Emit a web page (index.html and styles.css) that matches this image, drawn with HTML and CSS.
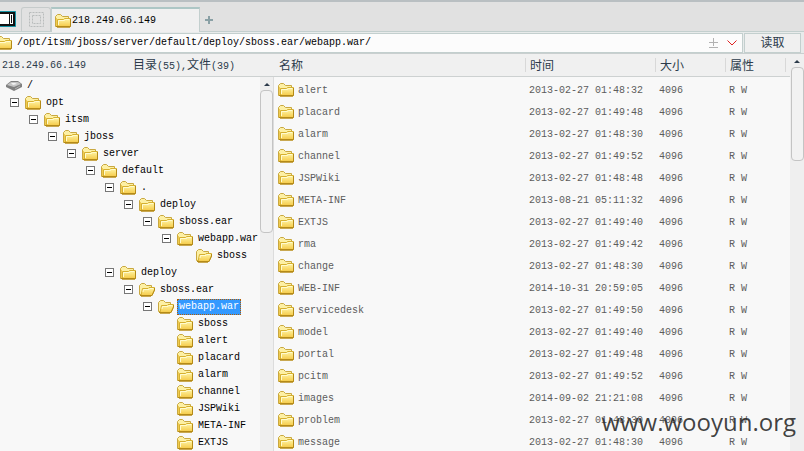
FILE: index.html
```html
<!DOCTYPE html>
<html lang="zh-CN">
<head>
<meta charset="utf-8">
<title>218.249.66.149</title>
<link rel="stylesheet" href="styles.css">
</head>
<body>
<svg class="defs" aria-hidden="true">
  <defs>
    <linearGradient id="gold" x1="0" y1="0" x2="0" y2="1"><stop offset="0" stop-color="#fff6a8"/><stop offset="1" stop-color="#f5ca48"/></linearGradient>
    <symbol id="folder" viewBox="0 0 16 14">
      <path d="M.5 12.500V2.500L2.500 .500H5.500L7.500 2.500H13.500V12.500Z" fill="#fdf0a4" stroke="#c9a840"/>
      <path d="M1.500 4V12" stroke="#f1cb4f"/>
      <path d="M2.500 12.500V5.500H8.500L9.500 4.500H15.500V12.500Z" fill="url(#gold)" stroke="#d6b030"/>
      <path d="M3.500 11V6.500H9.500L10.500 5.500H14" fill="none" stroke="#fffbd0"/>
      <path d="M1 12.500H15.500V5" fill="none" stroke="#b48a18"/>
      <path d="M2 13.500H15" stroke="#c9a850"/>
    </symbol>
    <symbol id="folder-open" viewBox="0 0 16 14">
      <path d="M.5 11.500V2.500L2.500 .500H5.500L7.500 2.500H12.500V11.500Z" fill="#fdf0a4" stroke="#c9a840"/>
      <path d="M2 12.500L3.500 5.500H9L10 4.500H15.500V7L13 12.500Z" fill="url(#gold)" stroke="#d6b030"/>
      <path d="M4 9L4.500 6.500H10L11 5.500H14" fill="none" stroke="#fffbd0"/>
      <path d="M1 12.500H13L15.500 7V5" fill="none" stroke="#b48a18"/>
      <path d="M2 13.500H12" stroke="#c9a850"/>
    </symbol>
  </defs>
</svg>
<div class="app">
  <header class="tabs">
    <button class="tab panes" aria-label="窗格"><svg width="16" height="16" viewBox="0 0 16 16"><path d="M0 .500H15.500V15.500H0" fill="#111" stroke="#1593a5"/><path d="M0 3H13V13H0Z" fill="#fff"/><path d="M9 2H10V13H9ZM11 4H12V12H11Z" fill="#111"/></svg></button>
    <button class="tab blank" aria-label="主页"><svg width="15" height="15" viewBox="0 0 15 15" fill="none" stroke="#b9bcbc"><path d="M.5 .500H14.500V14.500H.5Z" stroke-dasharray="2 1"/><path d="M3.500 3.500H11.500V11.500H3.500Z" stroke-dasharray="2 1"/></svg></button>
    <button class="tab current"><svg class="icon"><use href="#folder"/></svg><span>218.249.66.149</span></button>
    <button class="add" aria-label="新建"><svg width="8" height="8" viewBox="0 0 8 8"><path d="M4 0V8M0 4H8" stroke="#8aa0a5" stroke-width="2"/></svg></button>
  </header>
  <form class="address">
    <div class="field">
      <svg class="icon"><use href="#folder"/></svg>
      <input type="text" aria-label="路径" value="/opt/itsm/jboss/server/default/deploy/sboss.ear/webapp.war/">
      <svg width="9" height="10" viewBox="0 0 9 10" fill="none" stroke="#b2b2b2"><path d="M4.500 0V8M0 4.500H9M0 9.500H9"/></svg>
      <button type="button" class="drop" aria-label="展开"><svg width="10" height="6" viewBox="0 0 10 6" fill="none" stroke="#e02020"><path d="M.5 .500L5 5L9.500 .500"/></svg></button>
    </div>
    <button type="button" class="go">读取</button>
  </form>
  <main class="main">
    <section class="side">
      <div class="head summary"><span>218.249.66.149</span><span><b>目录</b>(55),<b>文件</b>(39)</span></div>
      <div class="body">
        <nav class="tree">
          <div class="node root"><svg class="disk" viewBox="0 0 16 10"><path d="M0 4L5 0H12L16 3V6L8 10L0 6Z" fill="#808080"/><path d="M1 4L5 1H12L15 3L8 6Z" fill="#c4c4c4"/><path d="M5 2H9L11 3L7 4Z" fill="#f2f2f2"/><path d="M9 8L14 5" stroke="#b0b0b0"/></svg><span>/</span></div>
          <ul class="top"><li><div class="node"><button class="toggle" aria-label="折叠"></button><svg class="icon"><use href="#folder"/></svg><span>opt</span></div>
          <ul><li><div class="node"><button class="toggle" aria-label="折叠"></button><svg class="icon"><use href="#folder"/></svg><span>itsm</span></div>
          <ul><li><div class="node"><button class="toggle" aria-label="折叠"></button><svg class="icon"><use href="#folder"/></svg><span>jboss</span></div>
          <ul><li><div class="node"><button class="toggle" aria-label="折叠"></button><svg class="icon"><use href="#folder"/></svg><span>server</span></div>
          <ul><li><div class="node"><button class="toggle" aria-label="折叠"></button><svg class="icon"><use href="#folder"/></svg><span>default</span></div>
          <ul>
            <li><div class="node"><button class="toggle" aria-label="折叠"></button><svg class="icon"><use href="#folder"/></svg><span>.</span></div>
              <ul><li><div class="node"><button class="toggle" aria-label="折叠"></button><svg class="icon"><use href="#folder"/></svg><span>deploy</span></div>
              <ul><li><div class="node"><button class="toggle" aria-label="折叠"></button><svg class="icon"><use href="#folder"/></svg><span>sboss.ear</span></div>
              <ul><li><div class="node"><button class="toggle" aria-label="折叠"></button><svg class="icon"><use href="#folder"/></svg><span>webapp.war</span></div>
              <ul><li><div class="node leaf"><svg class="icon"><use href="#folder-open"/></svg><span>sboss</span></div></li></ul>
              </li></ul></li></ul></li></ul>
            </li>
            <li><div class="node"><button class="toggle" aria-label="折叠"></button><svg class="icon"><use href="#folder"/></svg><span>deploy</span></div>
              <ul><li><div class="node"><button class="toggle" aria-label="折叠"></button><svg class="icon"><use href="#folder-open"/></svg><span>sboss.ear</span></div>
              <ul><li><div class="node"><button class="toggle" aria-label="折叠"></button><svg class="icon"><use href="#folder-open"/></svg><span class="selected">webapp.war</span></div>
              <ul>
                <li><div class="node leaf"><svg class="icon"><use href="#folder"/></svg><span>sboss</span></div></li>
                <li><div class="node leaf"><svg class="icon"><use href="#folder"/></svg><span>alert</span></div></li>
                <li><div class="node leaf"><svg class="icon"><use href="#folder"/></svg><span>placard</span></div></li>
                <li><div class="node leaf"><svg class="icon"><use href="#folder"/></svg><span>alarm</span></div></li>
                <li><div class="node leaf"><svg class="icon"><use href="#folder"/></svg><span>channel</span></div></li>
                <li><div class="node leaf"><svg class="icon"><use href="#folder"/></svg><span>JSPWiki</span></div></li>
                <li><div class="node leaf"><svg class="icon"><use href="#folder"/></svg><span>META-INF</span></div></li>
                <li><div class="node leaf"><svg class="icon"><use href="#folder"/></svg><span>EXTJS</span></div></li>
              </ul></li></ul></li></ul>
            </li>
          </ul></li></ul></li></ul></li></ul></li></ul></li></ul>
        </nav>
        <div class="scroll"><i class="arrow"></i><i class="thumb long"></i></div>
      </div>
    </section>
    <section class="files">
      <table>
        <colgroup><col><col class="c-time"><col class="c-size"><col class="c-attr"></colgroup>
        <thead><tr><th>名称</th><th>时间</th><th>大小</th><th>属性</th></tr></thead>
        <tbody>
          <tr class="space"><td colspan="4"></td></tr>
          <tr><td><svg class="icon"><use href="#folder"/></svg>alert</td><td>2013-02-27 01:48:32</td><td>4096</td><td>R W</td></tr>
          <tr><td><svg class="icon"><use href="#folder"/></svg>placard</td><td>2013-02-27 01:49:48</td><td>4096</td><td>R W</td></tr>
          <tr><td><svg class="icon"><use href="#folder"/></svg>alarm</td><td>2013-02-27 01:48:30</td><td>4096</td><td>R W</td></tr>
          <tr><td><svg class="icon"><use href="#folder"/></svg>channel</td><td>2013-02-27 01:49:52</td><td>4096</td><td>R W</td></tr>
          <tr><td><svg class="icon"><use href="#folder"/></svg>JSPWiki</td><td>2013-02-27 01:48:48</td><td>4096</td><td>R W</td></tr>
          <tr><td><svg class="icon"><use href="#folder"/></svg>META-INF</td><td>2013-08-21 05:11:32</td><td>4096</td><td>R W</td></tr>
          <tr><td><svg class="icon"><use href="#folder"/></svg>EXTJS</td><td>2013-02-27 01:49:40</td><td>4096</td><td>R W</td></tr>
          <tr><td><svg class="icon"><use href="#folder"/></svg>rma</td><td>2013-02-27 01:49:42</td><td>4096</td><td>R W</td></tr>
          <tr><td><svg class="icon"><use href="#folder"/></svg>change</td><td>2013-02-27 01:48:30</td><td>4096</td><td>R W</td></tr>
          <tr><td><svg class="icon"><use href="#folder"/></svg>WEB-INF</td><td>2014-10-31 20:59:05</td><td>4096</td><td>R W</td></tr>
          <tr><td><svg class="icon"><use href="#folder"/></svg>servicedesk</td><td>2013-02-27 01:49:50</td><td>4096</td><td>R W</td></tr>
          <tr><td><svg class="icon"><use href="#folder"/></svg>model</td><td>2013-02-27 01:49:40</td><td>4096</td><td>R W</td></tr>
          <tr><td><svg class="icon"><use href="#folder"/></svg>portal</td><td>2013-02-27 01:49:48</td><td>4096</td><td>R W</td></tr>
          <tr><td><svg class="icon"><use href="#folder"/></svg>pcitm</td><td>2013-02-27 01:49:52</td><td>4096</td><td>R W</td></tr>
          <tr><td><svg class="icon"><use href="#folder"/></svg>images</td><td>2014-09-02 21:21:08</td><td>4096</td><td>R W</td></tr>
          <tr><td><svg class="icon"><use href="#folder"/></svg>problem</td><td>2013-02-27 01:48:30</td><td>4096</td><td>R W</td></tr>
          <tr><td><svg class="icon"><use href="#folder"/></svg>message</td><td>2013-02-27 01:48:30</td><td>4096</td><td>R W</td></tr>
        </tbody>
      </table>
      <div class="scroll wide"><i class="arrow"></i><i class="thumb"></i></div>
    </section>
  </main>
  <div class="watermark">www.wooyun.org</div>
</div>
</body>
</html>
```
FILE: styles.css
```css
* { box-sizing: border-box; }

body {
  margin: 0;
  background: #f8f8f8;
  color: #000;
  font: 10px/16px "Liberation Mono", "Noto Sans CJK SC", monospace;
}

button, input { font: inherit; color: inherit; border: 0; padding: 0; margin: 0; background: none; }
ul { list-style: none; margin: 0; padding: 0; }
svg { display: block; flex: none; }
.defs { position: absolute; width: 0; height: 0; }
.icon { width: 16px; height: 14px; }

.app {
  position: relative;
  display: flex;
  flex-direction: column;
  height: 100vh;
  overflow: hidden;
}

/* tabs */
.tabs {
  display: flex;
  align-items: flex-end;
  height: 32px;
  flex: none;
  background: #e1e1e1;
  border-top: 2px solid #b9bfc2;
  border-bottom: 1px solid #c3cfce;
}
.tab { display: flex; align-items: center; height: 24px; }
.panes { width: 21px; }
.blank {
  justify-content: center;
  width: 30px;
  border: 1px solid #c6cbcb;
  border-bottom: 0;
  border-radius: 3px 3px 0 0;
}
.current {
  width: 149px;
  margin: 0 0 -1px;
  height: 25px;
  padding-left: 3px;
  gap: 1px;
  background: #f0f0f0;
  border: 1px solid #c3cfce;
  border-top: 2px solid #adc6c5;
  border-bottom: 0;
}
.add { width: 18px; height: 22px; display: flex; align-items: center; justify-content: center; }

/* address */
.address {
  display: flex;
  gap: 1px;
  height: 21px;
  flex: none;
  padding: 1px 3px 0 0;
  background: #e8ebeb;
}
.field {
  flex: 1;
  display: flex;
  align-items: center;
  background: #fcfcfc;
  border: 1px solid #c3cfce;
  border-left: 0;
  padding-right: 5px;
}
.field > .icon { margin-left: -4px; }
.field input { flex: 1; min-width: 0; margin-left: 5px; outline: 0; }
.drop { margin-left: 9px; }
.go {
  width: 57px;
  padding-top: 2px;
  background: #f0f0f0;
  border: 1px solid #c3cfce;
  color: #2c3b4b;
  font-size: 12px;
}

/* panes */
.main { display: flex; flex: 1; min-height: 0; border-top: 1px solid #c9cfcf; }
.side {
  width: 274px;
  flex: none;
  display: flex;
  flex-direction: column;
}
.head, th {
  height: 23px;
  background: #f0f0f0;
  border-bottom: 1px solid #cdd1d1;
  color: #2c3b4b;
}
.summary { display: flex; align-items: center; gap: 47px; padding: 2px 0 0 2px; white-space: nowrap; flex: none; }
.summary b { font-weight: 400; font-size: 12px; }
.body { display: flex; flex: 1; min-height: 0; border-right: 1px solid #dcdcdc; }
.tree { flex: 1; min-width: 0; overflow: hidden; }

.tree ul ul { padding-left: 19px; }
.top { padding-left: 10px; }
.node { display: flex; align-items: center; height: 17px; white-space: nowrap; }
.node span { padding-left: 5px; }
.node .selected {
  margin-left: 3px;
  padding: 0 2px;
  background: #3399ff;
  color: #fff;
  outline: 1px dotted #b35c00;
  outline-offset: -1px;
}
.root { padding-left: 6px; }
.disk { width: 16px; height: 10px; }
.leaf { padding-left: 15px; }
.toggle {
  display: grid;
  place-items: center;
  width: 9px;
  height: 9px;
  margin-right: 6px;
  background: #fff;
  border: 1px solid #777;
}
.toggle::before { content: ""; width: 5px; height: 1px; background: #000; }

.scroll {
  width: 13px;
  flex: none;
  background: #efefef;
  display: flex;
  flex-direction: column;
  align-items: center;
}
.arrow {
  margin: 6px 0 4px;
  border: 3px solid transparent;
  border-top: 0;
  border-bottom-color: #2c3b4b;
}
.thumb { width: 13px; height: 94px; background: #f2f2f2; border: 1px solid #c4c4c4; border-radius: 4px; }
.long { height: 143px; }

/* file list */
.files { flex: 1; min-width: 0; display: flex; overflow: hidden; background: #f8f8f8; }
table {
  flex: 1;
  table-layout: fixed;
  width: 100%;
  align-self: flex-start;
  border-collapse: separate;
  border-spacing: 0;
  color: #5c5c5c;
}
.c-time { width: 130px; }
.c-size { width: 70px; }
.c-attr { width: 65px; }
th { font-weight: 400; font-size: 12px; text-align: left; padding: 3px 5px 0; }
th + th { background: linear-gradient(#d8d8d8, #d8d8d8) 0 4px / 1px 14px no-repeat #f0f0f0; }
th:last-child { background: linear-gradient(#d8d8d8, #d8d8d8) 0 4px / 1px 14px no-repeat, linear-gradient(#d8d8d8, #d8d8d8) 60px 4px / 1px 14px no-repeat #f0f0f0; }
td { height: 22px; padding: 0 4px; white-space: nowrap; }
.space td { height: 3px; padding: 0; }
td .icon { display: inline-block; vertical-align: middle; margin-right: 4px; }
.wide { width: 14px; }

/* overlay mark */
.watermark {
  position: absolute;
  right: 8px;
  bottom: 12px;
  color: rgba(40, 40, 40, .88);
  font: 24px/34px "Open Sans", "Noto Sans", sans-serif;
  pointer-events: none;
}
```
